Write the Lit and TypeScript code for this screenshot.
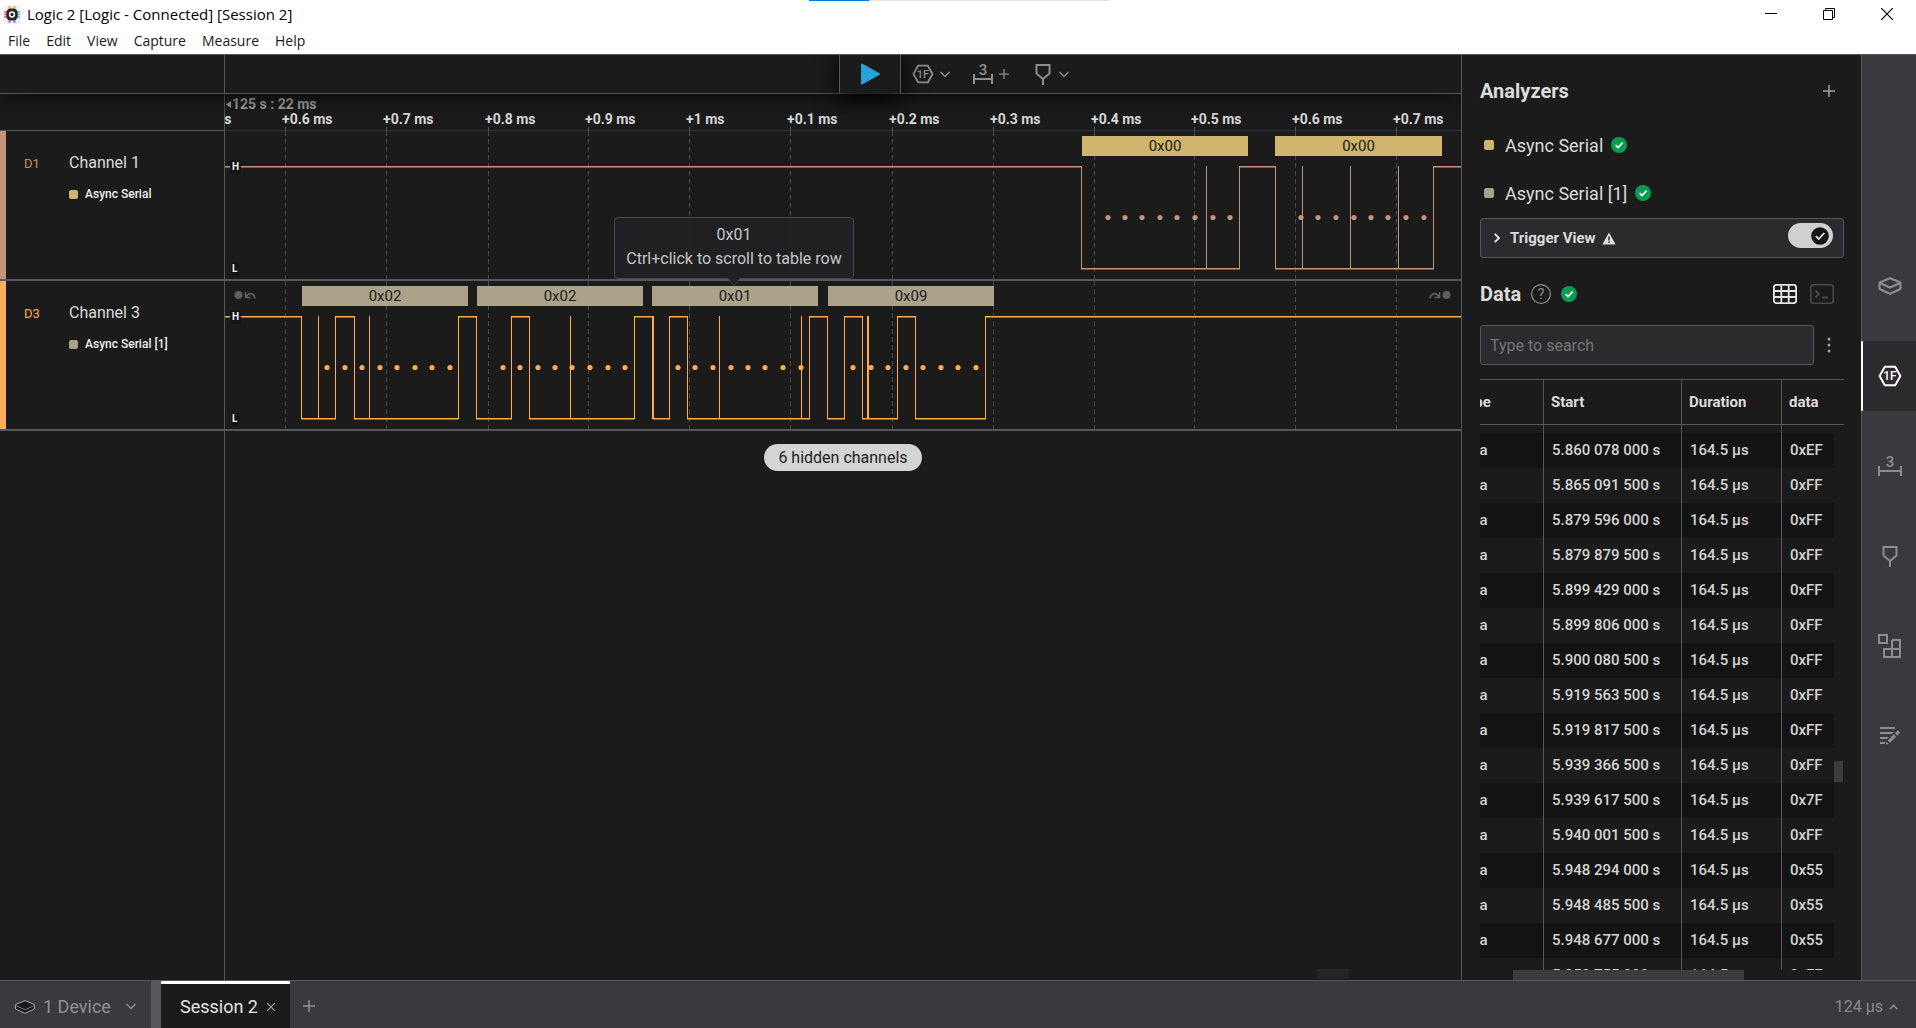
import { LitElement, html, svg, css, nothing } from "lit";
import { customElement, property, state } from "lit/decorators.js";
import { classMap } from "lit/directives/class-map.js";

interface Frame {
  start: number;
  width: number;
  value: string;
  hint?: string;
}

interface Channel {
  id: string;
  name: string;
  analyzer: string;
  tone: string;
  /** x positions where the level flips, the first one being a falling edge */
  edges: number[];
  /** x position and width of pulses too short to be drawn as levels */
  glitches: [number, number][];
  samples: number[];
  frames: Frame[];
  jumps: boolean;
}

const GRID = [60, 161, 263, 363, 464, 565, 667, 768, 869, 969, 1070, 1171];
const TICKS = ["0.6", "0.7", "0.8", "0.9", "1", "0.1", "0.2", "0.3", "0.4", "0.5", "0.6", "0.7"];

const CHANNELS: Channel[] = [
  {
    id: "D1",
    name: "Channel 1",
    analyzer: "Async Serial",
    tone: "copper",
    edges: [856, 1014, 1050, 1208],
    glitches: [[981, 1], [1077, 1], [1125, 1], [1173, 1]],
    samples: [883, 900, 917, 935, 952, 970, 988, 1005, 1076, 1093, 1111, 1129, 1146, 1163, 1181, 1199],
    frames: [
      { start: 857, width: 166, value: "0x00" },
      { start: 1050, width: 167, value: "0x00" },
    ],
    jumps: false,
  },
  {
    id: "D3",
    name: "Channel 3",
    analyzer: "Async Serial [1]",
    tone: "amber",
    edges: [76, 110, 129, 233, 251, 286, 304, 409, 428, 444, 462, 584, 602, 619, 637, 672, 690, 760],
    glitches: [[93, 1], [144, 1], [345, 1], [427, 2], [494, 1], [576, 1], [642, 2]],
    samples: [
      102, 120, 137, 155, 172, 190, 207, 225, 278, 295, 313, 330, 347, 365, 383, 400,
      453, 470, 488, 506, 523, 540, 558, 576, 628, 646, 663, 681, 698, 716, 733, 751,
    ],
    frames: [
      { start: 77, width: 166, value: "0x02" },
      { start: 252, width: 166, value: "0x02" },
      { start: 427, width: 166, value: "0x01", hint: "Ctrl+click to scroll to table row" },
      { start: 603, width: 166, value: "0x09" },
    ],
    jumps: true,
  },
];

const ROWS: [string, string][] = [
  ["5.860 078 000 s", "0xEF"],
  ["5.865 091 500 s", "0xFF"],
  ["5.879 596 000 s", "0xFF"],
  ["5.879 879 500 s", "0xFF"],
  ["5.899 429 000 s", "0xFF"],
  ["5.899 806 000 s", "0xFF"],
  ["5.900 080 500 s", "0xFF"],
  ["5.919 563 500 s", "0xFF"],
  ["5.919 817 500 s", "0xFF"],
  ["5.939 366 500 s", "0xFF"],
  ["5.939 617 500 s", "0x7F"],
  ["5.940 001 500 s", "0xFF"],
  ["5.948 294 000 s", "0x55"],
  ["5.948 485 500 s", "0x55"],
  ["5.948 677 000 s", "0x55"],
  ["5.950 755 000 s", "0xFF"],
];

const HIGH = 35;
const LOW = 137;

const base = css`
  * {
    box-sizing: border-box;
  }
  button {
    font: inherit;
    color: inherit;
    background: none;
    border: 0;
    padding: 0;
    margin: 0;
    cursor: pointer;
  }
  svg {
    display: block;
    flex: none;
  }
`;

const hexIcon = (size: number) => html`<svg width=${size} height=${size} viewBox="0 0 24 24" fill="none" stroke="currentColor" stroke-width="2">
  <path d="M6.800 2.800h10.400L22.400 12l-5.200 9.200H6.800L1.600 12z" stroke-linejoin="round" />
  <text x="12" y="16.200" text-anchor="middle" font-family="Roboto, sans-serif" font-size="12" font-weight="500" fill="currentColor" stroke="none">1F</text>
</svg>`;

const measureIcon = (w: number) => html`<svg width=${w} height="22" viewBox="0 0 ${w} 22" fill="none" stroke="currentColor" stroke-width="2">
  <path d="M1 11v10M${w - 1} 11v10M1 16h${w - 2}" />
  <text x=${w / 2} y="12" text-anchor="middle" font-family="Roboto, sans-serif" font-size="15" font-weight="500" fill="currentColor" stroke="none">3</text>
</svg>`;

const markerIcon = html`<svg width="16" height="22" viewBox="0 0 16 22" fill="none" stroke="currentColor" stroke-width="2">
  <path d="M1.500 2h13v8.500L8 16l-6.500-5.500zM8 15.500V22" />
</svg>`;

const chevron = () => html`<svg width="10" height="7" viewBox="0 0 10 7" fill="none" stroke="currentColor" stroke-width="1.300"><path d="M.5 1 5 5.500 9.500 1" /></svg>`;

const plus = (size: number, w: number) => html`<svg width=${size} height=${size} viewBox="0 0 12 12" fill="none" stroke="currentColor" stroke-width=${w}><path d="M6 0v12M0 6h12" /></svg>`;

const okBadge = html`<svg width="16" height="16" viewBox="0 0 16 16" role="img" aria-label="OK"><circle cx="8" cy="8" r="8" fill="#0a9b50" /><path d="M4.600 8.200 7 10.500l4.600-4.800" fill="none" stroke="#fff" stroke-width="1.700" /></svg>`;

@customElement("title-bar")
export class TitleBar extends LitElement {
  static styles = [
    base,
    css`
      :host {
        display: block;
        position: relative;
        background: #fff;
        color: #000;
        font: 14px/18px "Open Sans", "Noto Sans", sans-serif;
        height: 54px;
      }
      .caption {
        display: flex;
        align-items: center;
        height: 28px;
        padding-left: 3px;
      }
      .name {
        margin-left: 6px;
        flex: 1;
        font-size: 15px;
      }
      .control {
        width: 58px;
        height: 28px;
        display: grid;
        place-items: center;
      }
      .menus {
        display: flex;
        height: 26px;
        align-items: center;
        padding-left: 8px;
        gap: 16px;
        color: #1a1a1a;
      }
      .progress {
        position: absolute;
        top: 0;
        left: 50%;
        margin-left: -149px;
        width: 301px;
        height: 1px;
        background: linear-gradient(90deg, #0078d7 60px, #e5e5e5 60px);
      }
    `,
  ];

  render() {
    return html`
      <div class="progress"></div>
      <div class="caption">
        <svg width="18" height="19" viewBox="0 0 18 19">
          <rect width="18" height="19" rx="4" fill="#f1f0f4" />
          <path d="M6.500 1v4M11.500 1v4" stroke="#f5b73a" stroke-width="2" />
          <path d="M6.500 14v4M11.500 14v4" stroke="#a070e8" stroke-width="2" />
          <path d="M1 7h4M1 9.500h4M1 12h4" stroke="#f0604a" stroke-width="1.600" />
          <path d="M13 7h4M13 9.500h4M13 12h4" stroke="#4ab4ee" stroke-width="1.600" />
          <rect x="3.300" y="3.500" width="11.400" height="12" rx="4.500" fill="#26262a" />
          <circle cx="9" cy="9.500" r="2.400" fill="none" stroke="#fff" stroke-width="1.500" />
        </svg>
        <span class="name">Logic 2 [Logic - Connected] [Session 2]</span>
        <button class="control" aria-label="Minimize"><svg width="12" height="12" viewBox="0 0 12 12"><rect y="5" width="12" height="1" /></svg></button>
        <button class="control" aria-label="Restore"><svg width="12" height="12" viewBox="0 0 12 12" fill="none" stroke="#000"><path d="M.5 2.500h9v9h-9zM2.500 2.500v-2h9v9h-2" /></svg></button>
        <button class="control" aria-label="Close"><svg width="12" height="12" viewBox="0 0 12 12" stroke="#000" stroke-width="1.200"><path d="M0 0l12 12M12 0 0 12" /></svg></button>
      </div>
      <nav class="menus">
        ${["File", "Edit", "View", "Capture", "Measure", "Help"].map((m) => html`<button>${m}</button>`)}
      </nav>
    `;
  }
}

@customElement("channel-lane")
export class ChannelLane extends LitElement {
  @property({ attribute: false }) channel!: Channel;

  static styles = [
    base,
    css`
      :host {
        display: block;
        position: relative;
        height: 148px;
        min-width: 0;
      }
      .wave {
        width: 100%;
        height: 148px;
        overflow: hidden;
      }
      .copper {
        fill: #c89478;
      }
      .amber {
        fill: #ffab50;
      }
      .grid {
        stroke: #47474d;
        stroke-dasharray: 5 3;
      }
      .soft {
        opacity: 0.5;
      }
      .frame {
        position: absolute;
        top: 5px;
        height: 20px;
        color: #1b1b1b;
        font-size: 15px;
        line-height: 20px;
        text-align: center;
        background: #aaa38a;
      }
      .frame.copper {
        background: #d1b46e;
      }
      .level {
        font: 700 10px Roboto, sans-serif;
        fill: #f0f0f0;
      }
      .plate {
        fill: #151515;
      }
      .jump {
        position: absolute;
        top: 9px;
        left: 9px;
        color: #5e5e61;
      }
      .jump.next {
        left: auto;
        right: 10px;
      }
      .tip {
        position: absolute;
        z-index: 2;
        bottom: 27px;
        left: 50%;
        margin-left: -121px;
        width: 240px;
        padding: 5px 0 7px;
        border: 1px solid #48484d;
        border-radius: 4px;
        background: rgba(32, 32, 35, 0.93);
        color: #c6c6c6;
        font-size: 16px;
        line-height: 24px;
        white-space: nowrap;
      }
      .arrow {
        position: absolute;
        top: 100%;
        left: 50%;
        margin-left: -7px;
      }
    `,
  ];

  private levels() {
    const c = this.channel;
    const parts = [];
    let from = 0;
    c.edges.forEach((x, i) => {
      const y = i % 2 ? LOW : HIGH;
      parts.push(svg`<rect x=${from} y=${y} width=${x - from} height="1" /><rect class="soft" x=${from} y=${y + 1} width=${x - from + 1} height="1" />`);
      parts.push(svg`<rect x=${x} y=${HIGH} width="1" height=${LOW - HIGH + 1} />`);
      from = x;
    });
    parts.push(svg`<rect x=${from} y=${HIGH} width="100%" height="1" /><rect class="soft" x=${from} y=${HIGH + 1} width="100%" height="1" />`);
    return parts;
  }

  render() {
    const c = this.channel;
    const arrowIcon = (flip: boolean) => html`<svg width="22" height="10" viewBox="0 0 22 10">
      <g transform=${flip ? "translate(22 0) scale(-1 1)" : "translate(0 0)"}>
        <circle cx="4.500" cy="5" r="4" fill="currentColor" />
        <path d="M11.500 2v5.500h5M12 7c2.500-5 7.500-4.500 9.200 1.500" fill="none" stroke="currentColor" stroke-width="1.600" />
      </g>
    </svg>`;
    return html`
      <svg class="wave" aria-label="${c.name} waveform">
        ${GRID.map((x) => svg`<line class="grid" x1=${x + 0.5} y1="0" x2=${x + 0.5} y2="148" />`)}
        <g class=${c.tone}>
          ${this.levels()}
          ${c.glitches.map(([x, w]) => svg`<rect x=${x} y=${HIGH} width=${w} height=${LOW - HIGH + 1} />`)}
          ${c.samples.map((x) => svg`<circle cx=${x} cy="86.5" r="2.6" />`)}
        </g>
        <rect class="plate" x="5" y="29" width="11" height="14" rx="2" />
        <text class="level" x="7" y="39">H</text>
        <rect class="plate" x="6" y="131" width="8" height="14" rx="2" />
        <text class="level" x="7" y="141">L</text>
      </svg>
      ${c.jumps
        ? html`<button class="jump" aria-label="Previous frame">${arrowIcon(false)}</button>
            <button class="jump next" aria-label="Next frame">${arrowIcon(true)}</button>`
        : nothing}
      ${c.frames.map(
        (f) => html`<div class=${classMap({ frame: true, copper: c.tone === "copper" })} style="left:${f.start}px;width:${f.width}px">
          ${f.value}
          ${f.hint
            ? html`<div class="tip" role="tooltip">
                ${f.value}<br />${f.hint}
                <svg class="arrow" width="14" height="8" viewBox="0 0 14 8"><path d="M0-1h14L7 7z" fill="#202023" /><path d="M0 .5 7 7.500l7-7" fill="none" stroke="#48484d" /></svg>
              </div>`
            : nothing}
        </div>`,
      )}
    `;
  }
}

@customElement("capture-view")
export class CaptureView extends LitElement {
  static styles = [
    base,
    css`
      :host {
        display: flex;
        flex-direction: column;
        min-width: 0;
        overflow: hidden;
        border-right: 1px solid #56565b;
      }
      .row {
        display: grid;
        grid-template-columns: 225px minmax(0, 1fr);
        flex: none;
      }
      .side {
        border-right: 1px solid #56565b;
      }
      .toolbar {
        position: relative;
        z-index: 3;
        height: 39px;
        background: #1b1b1b;
        border-bottom: 1px solid #56565b;
        box-shadow: 0 0 24px rgba(0, 0, 0, 0.85);
      }
      .tools {
        display: flex;
        justify-content: center;
        align-items: center;
        padding-left: 230px;
        color: #8e8e8e;
      }
      .play {
        width: 62px;
        height: 38px;
        display: grid;
        place-items: center;
        border: solid #56565b;
        border-width: 0 1px;
        background: #1b1b1b;
        box-shadow: 0 4px 24px #000;
        position: relative;
      }
      .tool {
        display: flex;
        align-items: center;
        gap: 6px;
      }
      .tool.first {
        margin: 0 23px 0 11px;
      }
      .tool.measure {
        margin-right: 26px;
      }
      .tool.marker {
        gap: 8px;
        margin-right: 9px;
      }
      .ruler {
        height: 37px;
        border-bottom: 1px solid #2f2f35;
        font-weight: 700;
        font-size: 14px;
        line-height: 14px;
        color: #dadada;
      }
      .ruler .side {
        height: 37px;
        border-bottom: 1px solid #56565b;
      }
      .scale {
        position: relative;
        overflow: hidden;
        white-space: nowrap;
      }
      .origin {
        display: flex;
        align-items: center;
        gap: 1px;
        padding: 3px 0 0 1px;
        color: #a0a0a0;
      }
      .tick {
        position: absolute;
        top: 18px;
      }
      .notch {
        position: absolute;
        bottom: 0;
        width: 1px;
        height: 4px;
        background: #56565b;
      }
      .channel {
        height: 150px;
        border-bottom: 2px solid #56565b;
      }
      .label {
        display: grid;
        grid-template-columns: 63px 1fr;
        grid-template-rows: 28px 1fr;
        row-gap: 10px;
        border-left: 6px solid #c89478;
        padding-top: 18px;
        align-items: start;
      }
      .label.amber {
        border-left-color: #ffb057;
      }
      .id {
        padding-left: 18px;
        font-size: 13px;
        line-height: 30px;
        color: #c98c6d;
      }
      .amber .id {
        color: #ffab50;
      }
      .title {
        font-size: 16px;
        line-height: 28px;
        color: #dcdcdc;
      }
      .analyzer {
        grid-column: 2;
        display: flex;
        align-items: center;
        gap: 7px;
        font-size: 12px;
        font-weight: 500;
        line-height: 14px;
        color: #f0f0f0;
      }
      .swatch {
        width: 9px;
        height: 9px;
        border-radius: 2px;
        background: #d1b46e;
      }
      .amber .swatch {
        background: #aaa38a;
      }
      .rest {
        flex: 1;
        grid-template-rows: minmax(0, 1fr);
      }
      .free {
        display: flex;
        flex-direction: column;
        align-items: center;
        justify-content: space-between;
        padding: 13px 0 1px;
      }
      .pill {
        height: 27px;
        padding: 0 14px;
        border-radius: 14px;
        background: #d4d4d4;
        color: #1f1f1f;
        font-size: 16px;
        line-height: 26px;
      }
      .thumb {
        align-self: flex-end;
        width: 32px;
        height: 10px;
        margin-right: 112px;
        background: #252525;
      }
    `,
  ];

  render() {
    return html`
      <div class="row toolbar">
        <div class="side"></div>
        <div class="tools">
          <button class="play" aria-label="Start capture">
            <svg width="20" height="22" viewBox="0 0 20 22"><path d="M2 1.500v19L19 11z" fill="#27a3dc" stroke="#27a3dc" stroke-width="2" stroke-linejoin="round" /></svg>
          </button>
          <button class="tool first" aria-label="Add analyzer">${hexIcon(22)}${chevron()}</button>
          <button class="tool measure" aria-label="Add measurement">${measureIcon(20)}${plus(10, 1.5)}</button>
          <button class="tool marker" aria-label="Add marker">${markerIcon}${chevron()}</button>
        </div>
      </div>
      <div class="row ruler">
        <div class="side"></div>
        <div class="scale">
          <div class="origin"><svg width="5" height="7" viewBox="0 0 5 7"><path d="M5 0v7L0 3.500z" fill="currentColor" /></svg>125 s : 22 ms</div>
          <span class="tick" style="left:-44px">+0.5 ms</span>
          ${GRID.map((x, i) => html`<span class="tick" style="left:${x - 3}px">+${TICKS[i]} ms</span><i class="notch" style="left:${x}px"></i>`)}
        </div>
      </div>
      ${CHANNELS.map(
        (c) => html`<div class="row channel">
          <div class="side label ${c.tone}">
            <span class="id">${c.id}</span>
            <span class="title">${c.name}</span>
            <span class="analyzer"><i class="swatch"></i>${c.analyzer}</span>
          </div>
          <channel-lane .channel=${c}></channel-lane>
        </div>`,
      )}
      <div class="row rest">
        <div class="side"></div>
        <div class="free">
          <button class="pill">6 hidden channels</button>
          <div class="thumb"></div>
        </div>
      </div>
    `;
  }
}

@customElement("analyzer-panel")
export class AnalyzerPanel extends LitElement {
  @state() private armed = true;

  static styles = [
    base,
    css`
      :host {
        display: flex;
        flex-direction: column;
        min-width: 0;
        padding: 21px 17px 0 18px;
        color: #dcdcdc;
        overflow: hidden;
      }
      .head {
        display: flex;
        align-items: center;
        height: 30px;
        flex: none;
      }
      h2 {
        margin: 0;
        font-size: 20px;
        font-weight: 700;
        line-height: 30px;
      }
      .add {
        margin-left: auto;
        padding: 9px;
        color: #a0a0a0;
      }
      .analyzer {
        display: flex;
        align-items: center;
        gap: 8px;
        height: 48px;
        padding-left: 4px;
        font-size: 18px;
        flex: none;
      }
      .analyzer.top {
        margin-top: 15px;
      }
      .swatch {
        width: 10px;
        height: 10px;
        margin-right: 3px;
        border-radius: 2px;
        background: #d1b46e;
      }
      .swatch.stone {
        background: #aaa38a;
      }
      .trigger {
        display: flex;
        align-items: center;
        height: 40px;
        flex: none;
        margin-top: 1px;
        padding: 0 10px 0 13px;
        border: 1px solid #56565b;
        border-radius: 3px;
        background: #2b2b2d;
      }
      .expand {
        display: flex;
        align-items: center;
        gap: 5px;
        font-size: 15px;
        font-weight: 700;
      }
      .expand .caret {
        margin-right: 5px;
      }
      .warn {
        margin-left: 1px;
      }
      .toggle {
        margin: 0 0 5px auto;
        display: grid;
        align-items: center;
        justify-items: end;
      }
      .toggle > * {
        grid-area: 1 / 1;
      }
      .toggle input {
        appearance: none;
        width: 45px;
        height: 25px;
        margin: 0;
        border-radius: 13px;
        background: #d0d0d0;
        cursor: pointer;
      }
      .toggle svg {
        margin-right: 4px;
        pointer-events: none;
      }
      .data {
        margin-top: 21px;
        gap: 10px;
        flex: none;
      }
      .help {
        color: #8e8e8e;
      }
      .views {
        margin: 0 10px 0 auto;
        display: flex;
        gap: 13px;
      }
      .dim {
        color: #48484a;
      }
      .search {
        display: flex;
        align-items: center;
        margin-top: 16px;
        flex: none;
      }
      .search input {
        flex: 1;
        min-width: 0;
        height: 40px;
        padding: 0 9px;
        border: 1px solid #56565b;
        border-radius: 3px;
        background: #2b2b2d;
        color: #dcdcdc;
        font: 16px Roboto, sans-serif;
      }
      .search input::placeholder {
        color: #757578;
      }
      .more {
        width: 30px;
        display: grid;
        place-items: center;
        color: #a0a0a0;
      }
      .grid {
        position: relative;
        flex: 1;
        min-height: 0;
        overflow: hidden;
        margin-top: 14px;
      }
      table {
        width: calc(100% + 33px);
        margin-left: -33px;
        border-collapse: separate;
        border-spacing: 0;
        table-layout: fixed;
        font-size: 15px;
        text-align: left;
        white-space: nowrap;
      }
      th,
      td {
        padding: 0 0 0 7px;
        overflow: hidden;
        border-left: 1px solid #56565b;
      }
      th {
        height: 46px;
        border-top: 1px solid #56565b;
        border-bottom: 1px solid #56565b;
        font-weight: 700;
      }
      td {
        height: 35px;
        padding: 0 0 2px 8px;
        font-weight: 500;
        color: #d4d4d4;
      }
      th:first-child,
      td:first-child,
      .gutter {
        border-left: 0;
        padding-left: 11px;
      }
      .lead td {
        height: 8px;
      }
      .even td:not(.gutter) {
        background: #131313;
      }
      .type {
        width: 96px;
      }
      .start {
        width: 138px;
      }
      .duration {
        width: 100px;
      }
      .gap {
        width: 10px;
      }
      .vthumb {
        position: absolute;
        right: 1px;
        top: 382px;
        width: 9px;
        height: 21px;
        background: #3c3c3c;
      }
      .hbar {
        flex: none;
        height: 10px;
        padding: 0 100px 0 33px;
      }
      .hthumb {
        height: 10px;
        background: #3c3c3c;
      }
    `,
  ];

  render() {
    return html`
      <div class="head">
        <h2>Analyzers</h2>
        <button class="add" aria-label="Add analyzer">${plus(12, 1.5)}</button>
      </div>
      <div class="analyzer top"><i class="swatch"></i>Async Serial${okBadge}</div>
      <div class="analyzer"><i class="swatch stone"></i>Async Serial [1]${okBadge}</div>
      <div class="trigger">
        <button class="expand" aria-expanded="false">
          <svg class="caret" width="6" height="10" viewBox="0 0 6 10" fill="none" stroke="#f0f0f0" stroke-width="1.800"><path d="M.8.8 5 5 .8 9.200" /></svg>
          Trigger View
          <svg class="warn" width="14" height="13" viewBox="0 0 14 13"><path d="M7 .5 13.700 12.500H.3z" fill="#dcdcdc" /><path d="M7 4.500v4M7 9.500v1.600" stroke="#2b2b2d" stroke-width="1.500" /></svg>
        </button>
        <label class="toggle">
          <input type="checkbox" aria-label="Trigger View" .checked=${this.armed} @change=${() => (this.armed = !this.armed)} />
          <svg width="18" height="18" viewBox="0 0 18 18"><circle cx="9" cy="9" r="8.800" fill="#161616" /><path d="M4.800 9.200 7.800 12l5.500-6" fill="none" stroke="#e8e8e8" stroke-width="1.800" /></svg>
        </label>
      </div>
      <div class="head data">
        <h2>Data</h2>
        <button class="help" aria-label="Help">
          <svg width="20" height="20" viewBox="0 0 20 20"><circle cx="10" cy="10" r="9.400" fill="none" stroke="currentColor" stroke-width="1.200" /><text x="10" y="15" text-anchor="middle" font-family="Roboto, sans-serif" font-size="14" fill="currentColor">?</text></svg>
        </button>
        ${okBadge}
        <div class="views">
          <button aria-label="Table view">
            <svg width="24" height="20" viewBox="0 0 24 20" fill="none" stroke="#e6e6e6" stroke-width="1.800"><rect x=".9" y=".9" width="22.200" height="18.200" rx="2.500" /><path d="M1 7h22M1 13h22M8.300 1v18M15.700 1v18" /></svg>
          </button>
          <button class="dim" aria-label="Terminal view">
            <svg width="24" height="20" viewBox="0 0 24 20" fill="none" stroke="currentColor" stroke-width="1.600"><rect x=".8" y=".8" width="22.400" height="18.400" rx="2.500" /><path d="M5.500 6.500 9 10l-3.500 3.500M12 13.500h6" stroke-width="2" /></svg>
          </button>
        </div>
      </div>
      <div class="search">
        <input type="text" placeholder="Type to search" aria-label="Type to search" />
        <button class="more" aria-label="Search options">
          <svg width="4" height="16" viewBox="0 0 4 16" fill="currentColor"><circle cx="2" cy="2" r="1.500" /><circle cx="2" cy="8" r="1.500" /><circle cx="2" cy="14" r="1.500" /></svg>
        </button>
      </div>
      <div class="grid">
        <table>
          <colgroup>
            <col class="type" /><col class="start" /><col class="duration" /><col /><col class="gap" />
          </colgroup>
          <thead>
            <tr><th>Type</th><th>Start</th><th>Duration</th><th>data</th><th class="gutter"></th></tr>
          </thead>
          <tbody>
            <tr class="lead"><td></td><td></td><td></td><td></td><td class="gutter"></td></tr>
            ${ROWS.map(
              ([start, value], i) => html`<tr class=${i % 2 ? "odd" : "even"}>
                <td>data</td><td>${start}</td><td>164.5 µs</td><td>${value}</td><td class="gutter"></td>
              </tr>`,
            )}
          </tbody>
        </table>
        <div class="vthumb"></div>
      </div>
      <div class="hbar"><div class="hthumb"></div></div>
    `;
  }
}

@customElement("side-rail")
export class SideRail extends LitElement {
  @state() private active = 1;

  static styles = [
    base,
    css`
      :host {
        display: flex;
        flex-direction: column;
        justify-content: center;
        gap: 20px;
        padding-bottom: 14px;
        border-left: 1px solid #56565b;
        background: #3a393d;
        color: #8e8e8e;
      }
      .item {
        height: 70px;
        display: grid;
        place-items: center;
        margin-left: -1px;
        border-left: 2px solid transparent;
      }
      .item.on {
        background: #2b2b2d;
        border-left-color: #fff;
        color: #fff;
      }
    `,
  ];

  render() {
    const items = [
      {
        name: "Device",
        icon: html`<svg width="24" height="18" viewBox="0 0 24 18" fill="none" stroke="currentColor" stroke-width="2.200" stroke-linejoin="round"><path d="M12 1.300 21.500 5q1 .5 1 1.500v4.500q0 1-1 1.500L12 16.700 2.500 12.500q-1-.5-1-1.500V6.500q0-1 1-1.500z" /><path d="M1.800 6 12 10.600 22.200 6" /></svg>`,
      },
      { name: "Analyzers", icon: hexIcon(24) },
      { name: "Measurements", icon: measureIcon(24) },
      { name: "Timing markers", icon: markerIcon },
      {
        name: "Extensions",
        icon: html`<svg width="24" height="24" viewBox="0 0 24 24" fill="none" stroke="currentColor" stroke-width="2"><path d="M1 1h8v8H1zM14 6h8v17H6v-8h16M14 6v17" /></svg>`,
      },
      {
        name: "Notes",
        icon: html`<svg width="20" height="18" viewBox="0 0 20 18"><path d="M0 0h15v2H0zM0 5h14l-2 2H0zM0 10h9l-2 2H0zM0 15h5v2H0z" fill="currentColor" /><path d="M8.800 14.700 15 8.500M16 7.500l3-3" stroke="currentColor" stroke-width="3.200" /><path d="M5.800 17.500l.6-2.800 2.200 2.200z" fill="currentColor" /></svg>`,
      },
    ];
    return items.map(
      (it, i) => html`<button class=${classMap({ item: true, on: i === this.active })} aria-label=${it.name} @click=${() => (this.active = i)}>${it.icon}</button>`,
    );
  }
}

@customElement("status-bar")
export class StatusBar extends LitElement {
  static styles = [
    base,
    css`
      :host {
        display: flex;
        height: 47px;
        border-top: 1px solid #56565b;
        background: #3a393d;
        color: #919191;
      }
      .device {
        display: flex;
        align-items: center;
        width: 161px;
        padding: 4px 0 0 15px;
        border-right: 10px solid #56565b;
        font-size: 18px;
      }
      .text {
        margin: 0 15px 0 8px;
      }
      .tab {
        display: flex;
        align-items: center;
        gap: 9px;
        width: 129px;
        padding: 1px 0 0 19px;
        border-top: 3px solid #fff;
        background: #1b1b1b;
        color: #e6e6e6;
        font-size: 18px;
      }
      .close {
        color: #a0a0a0;
      }
      .new {
        padding: 2px 13px 0;
      }
      .zoom {
        display: flex;
        align-items: center;
        gap: 6px;
        margin-left: auto;
        padding: 4px 18px 0 0;
        font-size: 16px;
        color: #8b8b8b;
      }
    `,
  ];

  render() {
    return html`
      <button class="device">
        <svg width="20" height="14" viewBox="0 0 20 14" stroke="#a8a8a8" stroke-linejoin="round"><path d="M10 .6 19.500 4.500v4.500L10 13.400.5 9V4.500z" fill="#1b1b1b" /><path d="M.5 5.500 10 9.700l9.500-4.200" fill="none" stroke="#777" /></svg>
        <span class="text">1 Device</span>${chevron()}
      </button>
      <div class="tab">
        Session 2
        <button class="close" aria-label="Close session"><svg width="8" height="8" viewBox="0 0 8 8" stroke="currentColor" stroke-width="1.200"><path d="M0 0l8 8M8 0 0 8" /></svg></button>
      </div>
      <button class="new" aria-label="New session">${plus(12, 1.5)}</button>
      <button class="zoom">124 µs <svg width="9" height="6" viewBox="0 0 9 6" fill="none" stroke="currentColor" stroke-width="1.500"><path d="M.6 5.300 4.500 1.400l3.900 3.900" /></svg></button>
    `;
  }
}

@customElement("app-root")
export class AppRoot extends LitElement {
  static styles = css`
    :host {
      display: flex;
      flex-direction: column;
      height: 100vh;
      overflow: hidden;
      background: #1b1b1b;
      color: #dcdcdc;
      font-family: Roboto, sans-serif;
    }
    .body {
      flex: 1;
      min-height: 0;
      display: grid;
      grid-template-columns: minmax(0, 1fr) 399px 55px;
      grid-template-rows: minmax(0, 1fr);
      border-top: 1px solid #56565b;
    }
  `;

  render() {
    return html`
      <title-bar></title-bar>
      <div class="body">
        <capture-view></capture-view>
        <analyzer-panel></analyzer-panel>
        <side-rail></side-rail>
      </div>
      <status-bar></status-bar>
    `;
  }
}
